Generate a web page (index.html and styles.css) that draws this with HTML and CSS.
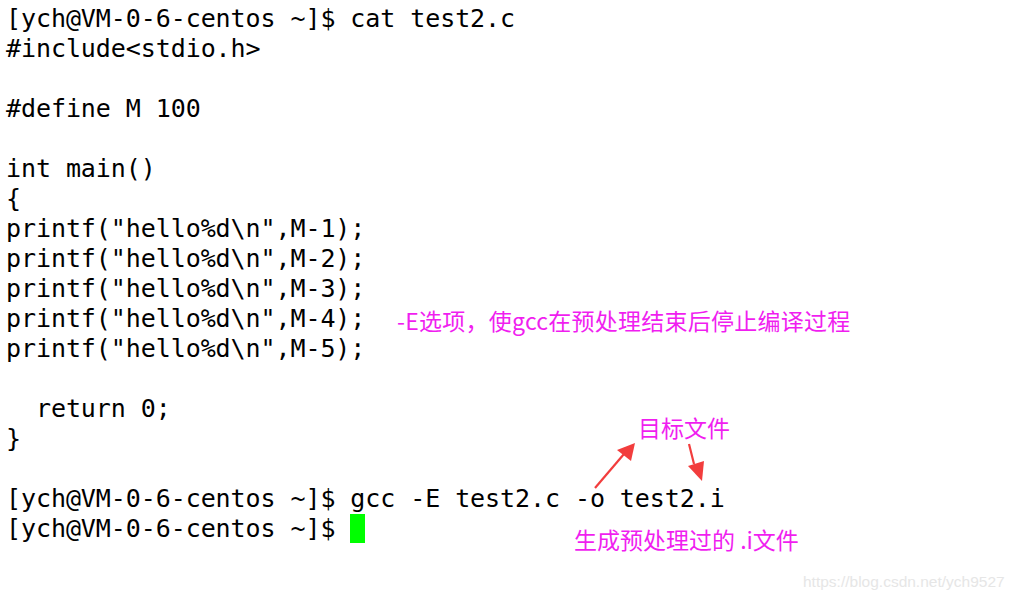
FILE: index.html
```html
<!DOCTYPE html>
<html>
<head>
<meta charset="utf-8">
<link rel="stylesheet" href="styles.css">
</head>
<body>
<div class="screen">
<pre class="term">[ych@VM-0-6-centos ~]$ cat test2.c
#include&lt;stdio.h&gt;

#define M 100

int main()
{
printf("hello%d\n",M-1);
printf("hello%d\n",M-2);
printf("hello%d\n",M-3);
printf("hello%d\n",M-4);
printf("hello%d\n",M-5);

  return 0;
}

[ych@VM-0-6-centos ~]$ gcc -E test2.c -o test2.i
[ych@VM-0-6-centos ~]$ <span class="cursor"> </span></pre>
<div class="note note-e">-E选项，使gcc在预处理结束后停止编译过程</div>
<div class="note note-target">目标文件</div>
<div class="note note-gen">生成预处理过的 .i文件</div>
<svg class="arrows" width="1017" height="602" viewBox="0 0 1017 602">
  <line x1="595" y1="488" x2="624" y2="454" stroke="#f23d3d" stroke-width="2.2"/>
  <polygon points="635,443 631,461 617,450" fill="#f23d3d"/>
  <line x1="689" y1="444" x2="694" y2="464" stroke="#f23d3d" stroke-width="2.2"/>
  <polygon points="702,481 688,466 704,461" fill="#f23d3d"/>
</svg>
<div class="watermark">https://blog.csdn.net/ych9527</div>
</div>
</body>
</html>
```
FILE: styles.css
```css
html, body {
  margin: 0;
  padding: 0;
  background: #ffffff;
}
.screen {
  position: relative;
  width: 1017px;
  height: 602px;
  overflow: hidden;
}
.term {
  margin: 0;
  padding: 4px 0 0 6px;
  font-family: "DejaVu Sans Mono", monospace;
  font-size: 25px;
  letter-spacing: -0.08px;
  line-height: 30px;
  color: #000000;
}
.cursor {
  display: inline-block;
  width: 15px;
  height: 29px;
  background: #00ff00;
  vertical-align: top;
  margin-top: 0;
}
.note {
  position: absolute;
  font-family: "Noto Sans CJK SC", "Microsoft YaHei", sans-serif;
  font-size: 23px;
  line-height: 30px;
  color: #f01ef0;
  white-space: nowrap;
}
.note-e { left: 397px; top: 305px; letter-spacing: 0.25px; }
.note-target { left: 638px; top: 412px; }
.note-gen { left: 574px; top: 524px; }
.arrows {
  position: absolute;
  left: 0;
  top: 0;
}
.watermark {
  position: absolute;
  left: 803px;
  top: 573px;
  font-family: "Liberation Sans", Arial, sans-serif;
  font-size: 15.5px;
  color: #e6e6e6;
}
```
